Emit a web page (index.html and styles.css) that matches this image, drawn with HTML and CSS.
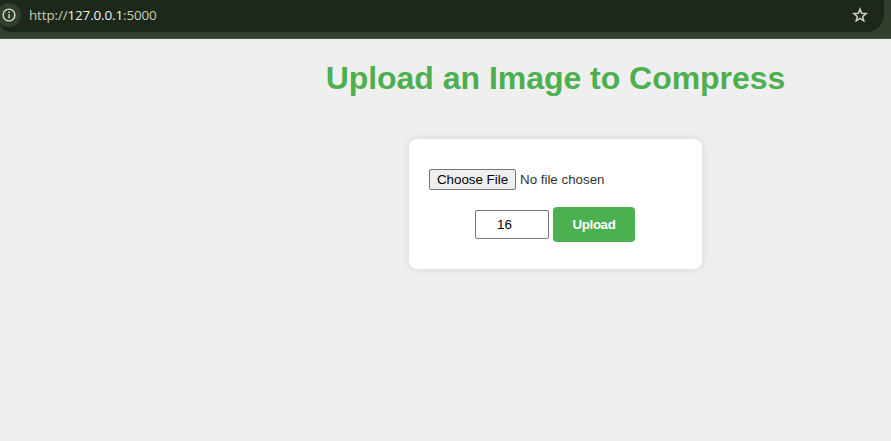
FILE: index.html
```html
<!DOCTYPE html>
<html lang="en">
<head>
<meta charset="utf-8">
<title>Upload an Image to Compress</title>
<link rel="stylesheet" href="styles.css">
</head>
<body>
<header class="toolbar">
  <div class="omnibox">
    <span class="site-info">
      <svg width="14" height="14" viewBox="0 0 14 14" fill="none" stroke="#d5dccd" stroke-width="1.4"><circle cx="7" cy="7" r="5.9"/><path d="M7 6.2v4M7 3.6v1.4"/></svg>
    </span>
    <span class="url">http://<span class="host">127.0.0.1</span>:5000</span>
    <svg class="star" width="16" height="16" viewBox="0 0 16 16" fill="none" stroke="#c9d0c1" stroke-width="1.5"><path d="M8 2.1l1.65 4.15 4.45.3-3.42 2.88 1.1 4.37L8 11.4l-3.78 2.4 1.1-4.37L1.9 6.55l4.45-.3z"/></svg>
  </div>
</header>
<main class="page">
  <h1>Upload an Image to Compress</h1>
  <form class="card">
    <div class="file-row">
      <button type="button" class="choose">Choose File</button>
      <span class="file-name">No file chosen</span>
    </div>
    <div class="action-row">
      <input class="count" type="text" value="16">
      <button type="button" class="upload">Upload</button>
    </div>
  </form>
</main>
</body>
</html>
```
FILE: styles.css
```css
* { box-sizing: border-box; }
body {
  margin: 0;
  height: 441px;
  overflow: hidden;
  background: #efefef;
  font-family: "Liberation Sans", Arial, sans-serif;
  color: #333;
}
.toolbar {
  height: 39px;
  padding-right: 7px;
  background: #333f2e;
  border-bottom: 1px solid #475042;
}
.omnibox {
  display: flex;
  align-items: center;
  height: 32px;
  padding: 0 16px 2px 0;
  background: #1e281a;
  border-radius: 0 0 17px 10px;
}
.site-info {
  display: flex;
  align-items: center;
  justify-content: center;
  width: 24px;
  height: 24px;
  margin-left: -3px;
  border-radius: 50%;
  background: #333f2e;
}
.url {
  flex: 1;
  margin-left: 8px;
  font: 13.5px/20px "Open Sans", "Noto Sans", sans-serif;
  letter-spacing: -.16px;
  color: #c4cbbd;
}
.host { color: #eef2ea; }
.page {
  display: flex;
  flex-direction: column;
  align-items: center;
  padding-left: 220px;
}
h1 {
  margin: 21px 0 43px;
  font-size: 32px;
  line-height: 36px;
  letter-spacing: -.03px;
  white-space: nowrap;
  color: #4caf50;
}
.card {
  width: 293px;
  height: 130px;
  padding: 30px 20px 0;
  background: #fff;
  border-radius: 8px;
  box-shadow: 0 0 10px rgba(0, 0, 0, .1);
}
.file-row {
  display: flex;
  align-items: center;
  gap: 4px;
  height: 21px;
  font-size: 13.333px;
}
.choose {
  width: 87px;
  height: 21px;
  padding: 0;
  border: 1px solid #767676;
  border-radius: 2px;
  background: #efefef;
  color: #000;
  font: 13.333px "Liberation Sans", Arial, sans-serif;
}
.action-row {
  display: flex;
  align-items: center;
  gap: 4px;
  margin: 17px 0 0 46px;
}
.count {
  width: 74px;
  height: 29px;
  padding: 0 21px;
  border: 1px solid #767676;
  border-radius: 2px;
  background: #fff;
  color: #000;
  font: 13.333px "Liberation Sans", Arial, sans-serif;
}
.upload {
  width: 82px;
  height: 35px;
  padding: 0;
  border: 0;
  border-radius: 4px;
  background: #4caf50;
  color: #fff;
  font: bold 13.333px "Liberation Sans", Arial, sans-serif;
  letter-spacing: -.4px;
}
```
